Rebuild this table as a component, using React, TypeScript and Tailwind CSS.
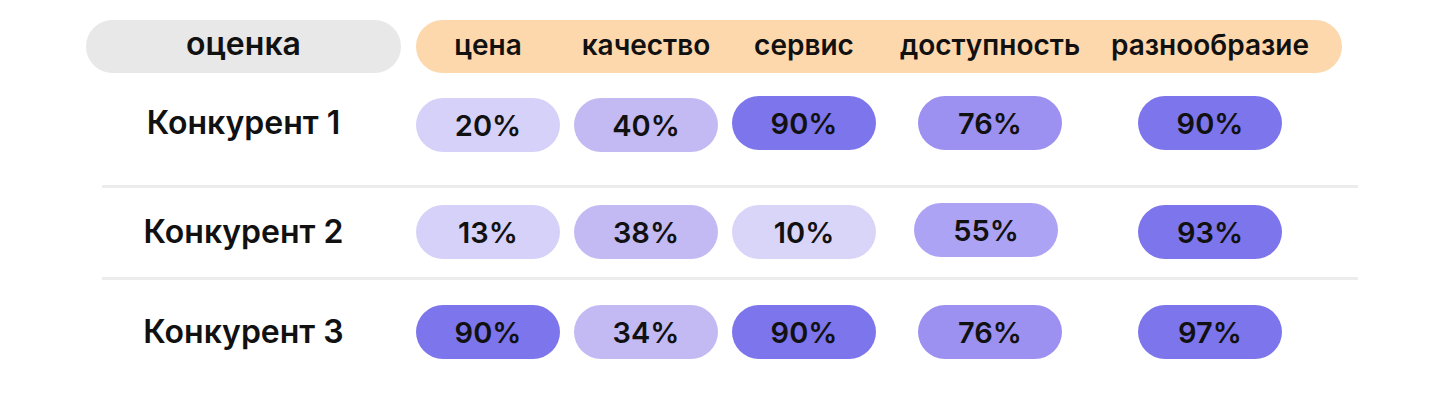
import React from "react";

type Cell = { v: string; cls: string };

const L1 = "bg-[#d6d1f8]";
const L2 = "bg-[#c3baf4]";
const D = "bg-[#7d75eb]";
const M = "bg-[#9c91f0]";
const M2 = "bg-[#ada3f4]";

const colMargins = ["ml-0", "ml-[14px]", "ml-[14px]", "ml-[42px]", "ml-[76px]"];

const rows: { name: string; cells: Cell[]; cls: string }[] = [
  {
    name: "Конкурент 1",
    cls: "pt-[23px] pb-[35px]",
    cells: [
      { v: "20%", cls: L1 + " translate-y-[2px]" },
      { v: "40%", cls: L2 + " translate-y-[2px]" },
      { v: "90%", cls: D },
      { v: "76%", cls: M },
      { v: "90%", cls: D },
    ],
  },
  {
    name: "Конкурент 2",
    cls: "pt-[17px] pb-[18px]",
    cells: [
      { v: "13%", cls: L1 },
      { v: "38%", cls: L2 },
      { v: "10%", cls: "bg-[#d9d5f9]" },
      { v: "55%", cls: M2 + " -translate-y-[2px] -translate-x-[4px]" },
      { v: "93%", cls: D },
    ],
  },
  {
    name: "Конкурент 3",
    cls: "pt-[25px] pb-[42px]",
    cells: [
      { v: "90%", cls: D },
      { v: "34%", cls: L2 },
      { v: "90%", cls: D },
      { v: "76%", cls: M },
      { v: "97%", cls: D },
    ],
  },
];

const headers = ["цена", "качество", "сервис", "доступность", "разнообразие"];

export default function App() {
  return (
    <div
      className="w-[1440px] h-[402px] bg-white text-[#111] overflow-hidden"
      style={{ fontFamily: "Inter, 'Noto Sans', sans-serif" }}
    >
      <div className="pt-[20px] flex items-center pl-[86px]">
        <div className="w-[315px] h-[53px] rounded-full bg-[#e8e8e8] flex items-center justify-center text-[32px] leading-none font-semibold pb-[5px]">
          оценка
        </div>
        <div className="ml-[15px] w-[926px] h-[53px] rounded-full bg-[#fdd8ad] flex items-center">
          {headers.map((h, i) => (
            <div
              key={h}
              className={`${colMargins[i]} w-[144px] flex justify-center text-[28px] leading-none font-semibold pb-[3px] whitespace-nowrap`}
            >
              {h}
            </div>
          ))}
        </div>
      </div>
      {rows.map((r, ri) => (
        <div key={r.name}>
          <div className={`flex items-center pl-[86px] ${r.cls}`}>
            <div className="w-[315px] flex justify-center text-[32px] leading-none font-semibold">
              {r.name}
            </div>
            <div className="ml-[15px] flex items-center">
              {r.cells.map((c, i) => (
                <div
                  key={i}
                  className={`${colMargins[i]} w-[144px] h-[54px] rounded-full flex items-center justify-center text-[29px] leading-none font-semibold ${c.cls}`}
                >
                  {c.v}
                </div>
              ))}
            </div>
          </div>
          {ri < 2 && <div className="ml-[102px] w-[1256px] h-[3px] bg-[#ececec]" />}
        </div>
      ))}
    </div>
  );
}
